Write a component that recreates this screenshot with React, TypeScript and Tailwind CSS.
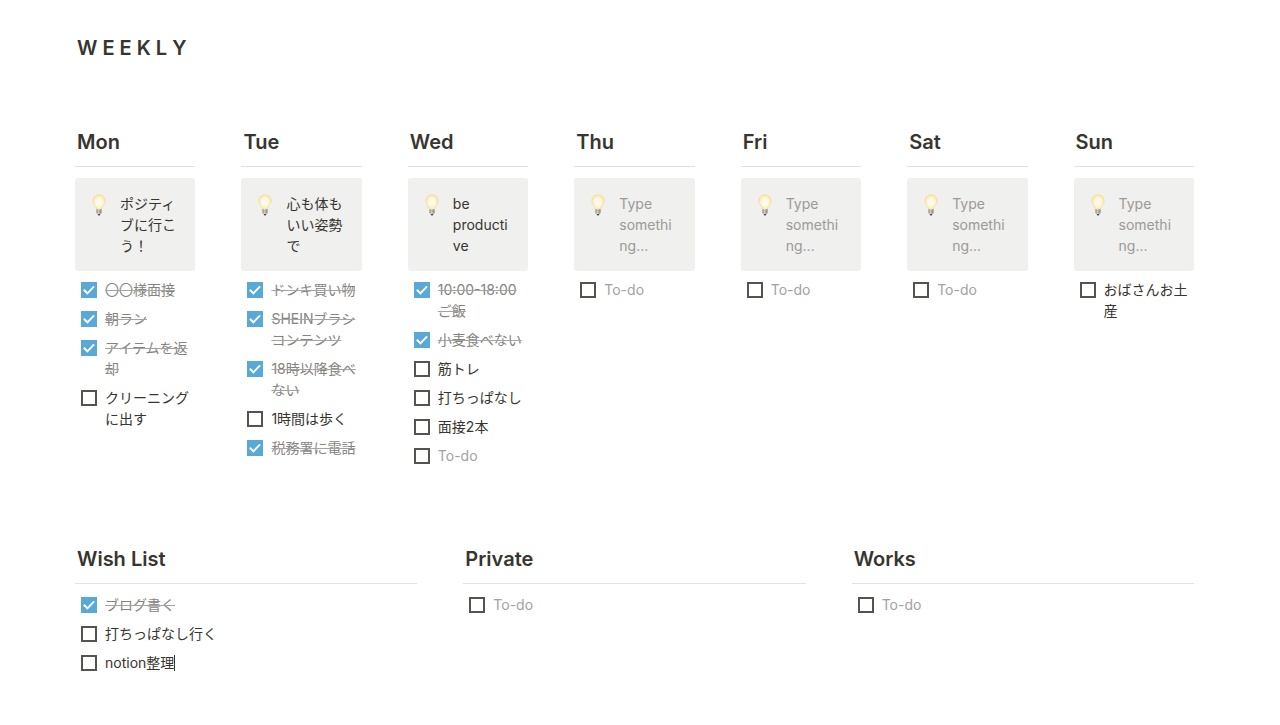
import { useId, useState } from 'react';

type Todo = { text?: string; done?: boolean; caret?: boolean };
type Day = { name: string; note?: string; todos: Todo[] };
type List = { name: string; todos: Todo[] };

const days: Day[] = [
  {
    name: 'Mon',
    note: 'ポジティブに行こう！',
    todos: [
      { text: '〇〇様面接', done: true },
      { text: '朝ラン', done: true },
      { text: 'アイテムを返却', done: true },
      { text: 'クリーニングに出す' },
    ],
  },
  {
    name: 'Tue',
    note: '心も体もいい姿勢で',
    todos: [
      { text: 'ドンキ買い物', done: true },
      { text: 'SHEINブラシコンテンツ', done: true },
      { text: '18時以降食べない', done: true },
      { text: '1時間は歩く' },
      { text: '税務署に電話', done: true },
    ],
  },
  {
    name: 'Wed',
    note: 'be productive',
    todos: [
      { text: '10:00-18:00ご飯', done: true },
      { text: '小麦食べない', done: true },
      { text: '筋トレ' },
      { text: '打ちっぱなし' },
      { text: '面接2本' },
      {},
    ],
  },
  { name: 'Thu', todos: [{}] },
  { name: 'Fri', todos: [{}] },
  { name: 'Sat', todos: [{}] },
  { name: 'Sun', todos: [{ text: 'おばさんお土産' }] },
];

const lists: List[] = [
  {
    name: 'Wish List',
    todos: [
      { text: 'ブログ書く', done: true },
      { text: '打ちっぱなし行く' },
      { text: 'notion整理', caret: true },
    ],
  },
  { name: 'Private', todos: [{}] },
  { name: 'Works', todos: [{}] },
];

function Bulb() {
  return (
    <svg viewBox="0 -1 14 24" className="h-6 w-3.5 shrink-0" aria-hidden="true">
      <defs>
        <radialGradient id="bulb-glow" cx="0.5" cy="0.5" r="0.55">
          <stop offset="0" stopColor="#fffef8" />
          <stop offset="0.5" stopColor="#fff8dc" />
          <stop offset="0.85" stopColor="#fbe7aa" />
          <stop offset="1" stopColor="#f3dc9c" />
        </radialGradient>
        <linearGradient id="bulb-cap" x1="0" x2="1" y1="0" y2="0">
          <stop offset="0" stopColor="#8a867f" />
          <stop offset="0.4" stopColor="#dddbd7" />
          <stop offset="1" stopColor="#817d77" />
        </linearGradient>
      </defs>
      <path
        d="M7 .8C3.5.8.8 3.4.8 6.8c0 2.3 1.2 3.7 2.2 5.2.8 1.2 1 2.3 1.4 3.5h5.2c.4-1.2.6-2.3 1.4-3.5 1-1.5 2.200-2.900 2.200-5.200C13.200 3.400 10.500.8 7 .8Z"
        fill="url(#bulb-glow)"
        stroke="#efd893"
        strokeWidth=".5"
      />
      <path d="M4.500 15.300h5v3.700l-1.300 1.200H5.800L4.500 19Z" fill="url(#bulb-cap)" />
      <path d="M4.500 16.800l5-.4M4.500 18.300l5-.4" stroke="#9a9690" strokeWidth=".5" />
      <path d="M5.700 20h2.600L7.700 21.400H6.300Z" fill="#454340" />
    </svg>
  );
}

function Heading({ children }: { children: string }) {
  return (
    <h2 className="border-b border-[#e3e2e0] px-0.5 pb-2.5 text-xl leading-7 font-semibold">
      {children}
    </h2>
  );
}

function TodoItem({ todo }: { todo: Todo }) {
  const id = useId();
  const [done, setDone] = useState(Boolean(todo.done));
  const tone = !todo.text
    ? 'text-[#a3a29f]'
    : done
      ? 'text-[#85847f] line-through decoration-[#a5a4a0] decoration-1'
      : '';
  return (
    <li className="flex items-start gap-2 py-1 pl-1.5">
      <span className="grid h-[21px] shrink-0 place-items-center">
        <input
          id={id}
          type="checkbox"
          checked={done}
          onChange={(e) => setDone(e.target.checked)}
          className="col-start-1 row-start-1 size-4 appearance-none border-2 border-[#55534e] checked:border-0 checked:bg-[#58a9d7]"
        />
        {done && (
          <svg viewBox="0 0 16 16" className="pointer-events-none col-start-1 row-start-1 size-4" aria-hidden="true">
            <path d="M2.800 7.800l3.600 3.500 6.700-7" fill="none" stroke="#fff" strokeWidth="1.900" />
          </svg>
        )}
      </span>
      <label htmlFor={id} className={`min-w-0 flex-1 text-sm leading-[21px] wrap-anywhere ${tone}`}>
        {todo.text ?? 'To-do'}
        {todo.caret && <span className="inline-block h-4 w-px bg-[#37352f] align-text-bottom" />}
      </label>
    </li>
  );
}

export default function App() {
  return (
    <main
      lang="ja"
      className="min-h-screen bg-white pt-[34px] pr-[86px] pb-10 pl-[75px] font-['Inter','Noto_Sans_CJK_JP',sans-serif] text-[#37352f]"
    >
      <h1 className="px-0.5 text-xl leading-7 font-semibold">W E E K L Y</h1>

      <div className="mt-[66px] grid grid-cols-7 gap-x-[46px]">
        {days.map((day) => (
          <section key={day.name} className="min-w-0">
            <Heading>{day.name}</Heading>
            <div className="mt-[11px] flex items-start gap-3.5 rounded-[3px] bg-[#f0f0ee] py-[15px] pr-[17px] pl-[17px]">
              <Bulb />
              <p className={`min-w-0 flex-1 text-sm leading-[21px] wrap-anywhere ${day.note ? '' : 'text-[#9b9a97]'}`}>
                {day.note ?? 'Type something...'}
              </p>
            </div>
            <ul className="mt-1">
              {day.todos.map((todo, i) => (
                <TodoItem key={i} todo={todo} />
              ))}
            </ul>
          </section>
        ))}
      </div>

      <div className="mt-[75px] grid grid-cols-3 gap-x-[46px]">
        {lists.map((list) => (
          <section key={list.name} className="min-w-0">
            <Heading>{list.name}</Heading>
            <ul className="mt-1.5">
              {list.todos.map((todo, i) => (
                <TodoItem key={i} todo={todo} />
              ))}
            </ul>
          </section>
        ))}
      </div>
    </main>
  );
}
